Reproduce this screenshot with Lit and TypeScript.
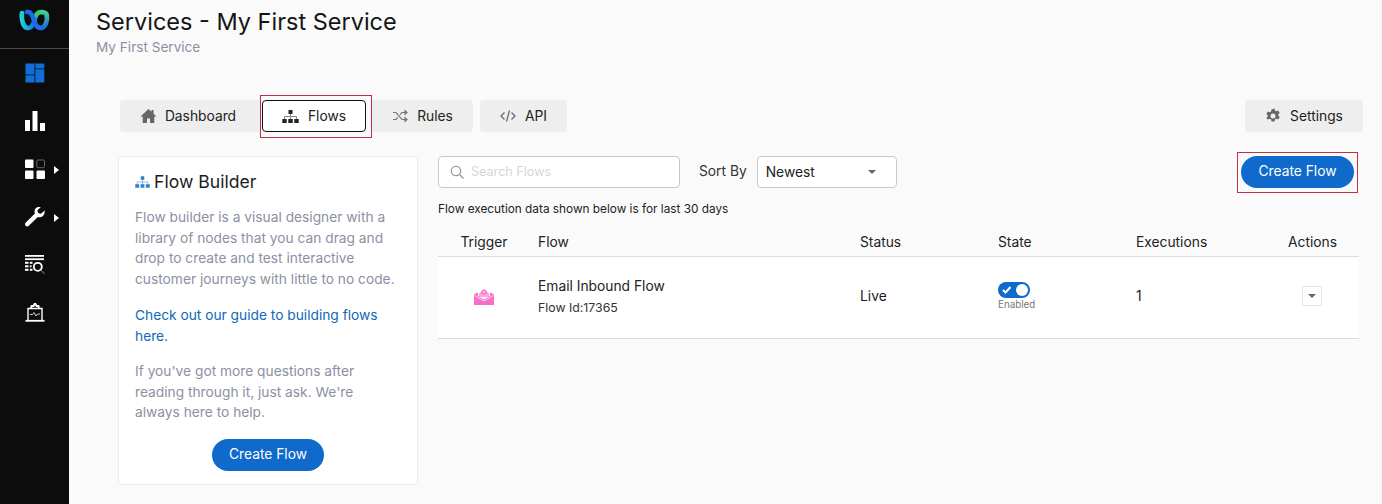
import {css, html, LitElement} from "lit"
import {customElement} from "lit/decorators.js"

const flowIcon = (color: string, line: string, w: number, h: number) => html`
  <svg width=${w} height=${h} viewBox="0 0 17 13">
    <path d="M8.500 4v5M2.500 9V6.500h12V9" fill="none" stroke=${line} stroke-width="1"/>
    <g fill=${color}>
      <rect x="6.500" y="0" width="4" height="4"/>
      <rect x="0.300" y="9" width="4.400" height="4"/>
      <rect x="6.300" y="9" width="4.400" height="4"/>
      <rect x="12.300" y="9" width="4.400" height="4"/>
    </g>
  </svg>`

@customElement("app-root")
export class AppRoot extends LitElement {
  static styles = css`
    :host {
      display: block;
      height: 504px;
      overflow: hidden;
      font-family: Inter, "Liberation Sans", sans-serif;
      font-size: 13.8px;
      color: #1c1c1c;
      background: #fafafa;
    }
    .page { display: flex; height: 504px; }

    .side { width: 69px; flex: none; background: #0c0c0c; display: flex; flex-direction: column; }
    .logo { height: 48px; border-bottom: 1px solid #4c4c4c; display: flex; align-items: flex-start; justify-content: center; box-sizing: content-box; }
    .logo svg { margin-top: 9px; }
    .nav { display: flex; flex-direction: column; }
    .nav-item { height: 48px; display: flex; align-items: center; justify-content: center; position: relative; }
    .arrow { position: absolute; left: 54px; top: 21px; width: 0; height: 0; border-left: 5px solid #fff; border-top: 4.5px solid transparent; border-bottom: 4.5px solid transparent; }

    .main { flex: 1; min-width: 0; }
    .head { padding: 7px 0 0 27px; height: 95px; box-sizing: border-box; }
    h1 { margin: 0; font-size: 23.5px; font-weight: 400; line-height: 29px; color: #151515; }
    .sub { font-size: 13.6px; line-height: 20px; margin-top: 1px; color: #8d90a3; }

    .tabs { display: flex; align-items: center; height: 42px; padding: 0 19px 0 51px; }
    .tab { height: 32px; box-sizing: border-box; background: #eeeeee; display: flex; align-items: center; justify-content: center; gap: 9px; color: #222; }
    .tab svg { flex: none; }
    .dash { width: 140px; border-radius: 4px 0 0 4px; gap: 8px; padding-right: 4px; }
    .hl { border: 1px solid #bf2f45; box-sizing: border-box; height: 43px; margin-bottom: -1px; width: 112px; padding: 4px 0 0 1px; }
    .flows { width: 104px; background: #fff; border: 1px solid #111; border-radius: 4px; }
    .rules { width: 101px; border-radius: 0 4px 4px 0; }
    .api { width: 87px; border-radius: 4px; margin-left: 7px; }
    .settings { width: 118px; border-radius: 4px; margin-left: auto; }

    .content { display: flex; align-items: flex-start; padding: 19px 23px 0 49px; gap: 20px; }

    .card { width: 300px; height: 329px; box-sizing: border-box; flex: none; background: #fff; border: 1px solid #ececec; border-radius: 4px; padding: 13px 16px 0; color: #8d90a3; font-size: 13.75px; line-height: 20.6px; }
    .card h2 { margin: 0 0 13px; font-size: 17.6px; font-weight: 400; line-height: 24px; color: #1c1c1c; display: flex; align-items: center; gap: 4px; }
    .card p { margin: 0 0 15px; }
    .card p.link { margin: 16px 0 14.5px; }
    .card a { color: #0f69b8; text-decoration: none; }
    .center { display: flex; justify-content: center; margin-top: 16.5px; }
    .btn { height: 32px; box-sizing: border-box; border: none; border-radius: 16px; background: #0f6acb; color: #fff; font: inherit; font-size: 13.8px; line-height: 30px; padding: 0 0 2px; width: 112px; }

    .right { flex: 1; min-width: 0; }
    .bar { display: flex; align-items: center; height: 32px; }
    .search { width: 242px; height: 32px; box-sizing: border-box; border: 1px solid #c9c9c9; border-radius: 4px; background: #fff; display: flex; align-items: center; gap: 6px; padding: 0 0 1px 11px; color: #d6d6d6; font-size: 12.6px; }
    .search svg { margin-top: 2px; }
    .sort { margin-left: 19px; margin-right: 10px; padding-bottom: 2px; color: #333; }
    .select { width: 140px; height: 32px; box-sizing: border-box; border: 1px solid #c9c9c9; border-radius: 4px; background: #fff; display: flex; align-items: center; justify-content: space-between; padding: 0 20px 1px 8px; color: #222; }
    .caret { width: 0; height: 0; border-top: 4.5px solid #666; border-left: 4px solid transparent; border-right: 4px solid transparent; }
    .hl2 { margin-left: auto; margin-right: 1px; margin-top: -4px; margin-bottom: -5px; border: 1px solid #bf2f45; box-sizing: border-box; width: 121px; height: 41px; padding: 3px 0 0 3px; }
    .hl2 .btn { width: 113px; display: block; }

    .note { font-size: 11.8px; line-height: 14px; margin-top: 14px; color: #222; }

    .row { display: grid; grid-template-columns: 100px 322px 138px 138px 1fr 71px; align-items: center; }
    .thead { height: 22px; margin-top: 18px; border-bottom: 1px solid #dcdcdc; align-items: start; line-height: 17px; color: #222; }
    .thead > div:first-child { text-align: center; padding-right: 8px; }
    .tbody { height: 78px; padding-bottom: 3px; background: #fff; border-bottom: 1px solid #dcdcdc; }
    .trig { display: flex; justify-content: center; padding-right: 8px; }
    .fname { line-height: 17px; color: #222; }
    .fid { font-size: 12.3px; line-height: 14px; margin-top: 6px; color: #333; }
    .state { display: flex; flex-direction: column; align-items: flex-start; }
    .toggle { width: 32px; height: 16px; border-radius: 8px; background: #0f6acb; position: relative; display: flex; align-items: center; padding-left: 4px; box-sizing: border-box; }
    .knob { position: absolute; right: 2px; top: 2px; width: 12px; height: 12px; border-radius: 50%; background: #fff; }
    .en { font-size: 9.8px; line-height: 11px; margin-top: 1px; color: #777; }
    .act { width: 20px; height: 20px; box-sizing: border-box; border: 1px solid #e2e2e2; border-radius: 2px; display: flex; align-items: center; justify-content: center; margin-left: 14px; background: #fff; }
    .act .caret { border-top-width: 4px; }
  `

  render() {
    return html`
      <div class="page">
        <aside class="side">
          <div class="logo">
            <svg width="31" height="22" viewBox="0 0 31 22" fill="none" stroke-width="4.700" stroke-linecap="round">
              <defs>
                <linearGradient id="wl" x1="0" y1="0" x2="1" y2="0"><stop offset="0" stop-color="#1fd0d8"/><stop offset="1" stop-color="#1570e8"/></linearGradient>
                <linearGradient id="wr" x1="0" y1="0" x2="0" y2="1"><stop offset="0" stop-color="#3fd08a"/><stop offset="1" stop-color="#2068e0"/></linearGradient>
              </defs>
              <path d="M15.500 11C16.500 6 19 3 22 3" stroke="#35c86a"/>
              <path d="M3 4C2 12 5 19 9 19c4 0 6-5 6.500-9" stroke="url(#wl)"/>
              <path d="M8 3c3.500-.5 6 4 7.500 10 1.500 4.500 4 6 6.500 6" stroke="#1a6af0"/>
              <path d="M23 3.200c2.500.3 4 .8 4.500 2C29 12 26 19 22 19" stroke="url(#wr)"/>
            </svg>
          </div>
          <nav class="nav">
            <div class="nav-item">
              <svg width="20" height="20" viewBox="0 0 20 20" fill="#0f6fd6">
                <rect x="0.500" y="0.500" width="9" height="11"/><rect x="10.300" y="0.500" width="9" height="5"/>
                <rect x="10.300" y="6.300" width="9" height="13.200"/><rect x="0.500" y="12.300" width="9" height="7.200"/>
              </svg>
            </div>
            <div class="nav-item">
              <svg width="20" height="20" viewBox="0 0 20 20" fill="#fff">
                <rect x="0" y="9" width="5" height="11"/><rect x="7.500" y="0" width="5" height="20"/><rect x="15" y="12" width="5" height="8"/>
              </svg>
            </div>
            <div class="nav-item">
              <svg width="20" height="20" viewBox="0 0 20 20" fill="#fff">
                <rect x="0" y="0.500" width="8.500" height="8.500" rx="1"/>
                <rect x="11.800" y="1" width="7.700" height="7.700" rx="1" fill="none" stroke="#666"/>
                <rect x="0" y="11.500" width="8.500" height="8.500" rx="1"/><rect x="11.500" y="11.500" width="8.500" height="8.500" rx="1"/>
              </svg>
              <span class="arrow"></span>
            </div>
            <div class="nav-item">
              <svg width="20" height="20" viewBox="0 0 20 20" fill="#fff">
                <path d="M19.500 3.500l-3.600 3.300-2.800-.8-.7-2.700L15.700.2c-2.600-.8-5.400.4-6 3-.3 1.100-.2 2.200.2 3.200L.8 15.600c-1 1-1 2.300-.2 3.200.9.900 2.300.9 3.200 0l9.100-8.900c1.100.4 2.300.5 3.400.1 2.500-.8 3.800-3.900 3.200-6.500z"/>
              </svg>
              <span class="arrow"></span>
            </div>
            <div class="nav-item">
              <svg width="20" height="20" viewBox="0 0 20 20" fill="#fff">
                <rect x="0" y="0" width="19" height="1.800"/><rect x="0" y="3.300" width="19" height="1.800"/>
                <rect x="0" y="6.800" width="3.500" height="2"/><rect x="4.800" y="6.800" width="2.700" height="2"/>
                <rect x="0" y="10.300" width="3.500" height="2"/><rect x="4.800" y="10.300" width="1.700" height="2"/>
                <rect x="0" y="13.800" width="3.500" height="2"/><rect x="4.800" y="13.800" width="2.700" height="2"/>
                <circle cx="12.800" cy="11.800" r="4" fill="none" stroke="#fff" stroke-width="1.800"/>
                <path d="M15.800 15l3.500 3.800" stroke="#999" stroke-width="1"/>
              </svg>
            </div>
            <div class="nav-item">
              <svg width="20" height="20" viewBox="0 0 20 20" fill="none" stroke="#fff" stroke-width="1.400">
                <path d="M3 17V5.500h14V17"/>
                <path d="M6 5.500L6.500 3h2L9.500 1h1l1 2h2l.5 2.500" stroke-width="1.800"/>
                <path d="M5 11.500h2.500l1.500-2 2 3.500 1.500-2H15" stroke-width="0.800"/>
                <path d="M.5 17.800h19" stroke-width="1.800"/>
              </svg>
            </div>
          </nav>
        </aside>

        <main class="main">
          <header class="head">
            <h1>Services - My First Service</h1>
            <div class="sub">My First Service</div>
          </header>

          <div class="tabs">
            <div class="tab dash">
              <svg width="17" height="16" viewBox="0 0 16 16" fill="#666"><path d="M8 1L0 8.500h2.200V15H6.500v-4.500h3V15h4.300V8.500H16L13 5.700V2h-2v1.800z"/></svg>
              Dashboard
            </div>
            <div class="hl"><div class="tab flows">${flowIcon("#222", "#888", 17, 13)} Flows</div></div>
            <div class="tab rules">
              <svg width="16" height="16" viewBox="0 0 16 16" fill="none" stroke="#777" stroke-width="1.200">
                <path d="M1 4.500h3l6 7h3.500M1 11.500h3l1.800-2.200M8 6.700l2-2.200h3.500"/>
                <path d="M13 2.800l2 1.700-2 1.700zM13 9.800l2 1.700-2 1.700z" fill="#777"/>
              </svg>
              Rules
            </div>
            <div class="tab api">
              <svg width="16" height="16" viewBox="0 0 16 16" fill="none" stroke="#666" stroke-width="1.200">
                <path d="M4.500 4.500L1 8l3.500 3.500M11.500 4.500L15 8l-3.500 3.500M9.500 2.500l-3 11"/>
              </svg>
              API
            </div>
            <div class="tab settings">
              <svg width="16" height="16" viewBox="0 0 16 16"><path fill="#666" fill-rule="evenodd" d="M9.500.500l.4 2 1.300.7 2-.7 1.500 2.600-1.500 1.300v1.200l1.500 1.300-1.500 2.600-2-.7-1.300.7-.4 2h-3l-.4-2-1.300-.7-2 .7L1.300 9.900l1.500-1.300V7.400L1.300 6.100l1.500-2.600 2 .7 1.300-.7.400-2zM8 5.500a2.500 2.500 0 1 0 0 5 2.500 2.500 0 0 0 0-5z"/></svg>
              Settings
            </div>
          </div>

          <div class="content">
            <section class="card">
              <h2>${flowIcon("#2f7fd0", "#7fb0e0", 15, 12)} Flow Builder</h2>
              <p>Flow builder is a visual designer with a library of nodes that you can drag and drop to create and test interactive customer journeys with little to no code.</p>
              <p class="link"><a href="#">Check out our guide to building flows here.</a></p>
              <p>If you've got more questions after reading through it, just ask. We're always here to help.</p>
              <div class="center"><button class="btn">Create Flow</button></div>
            </section>

            <section class="right">
              <div class="bar">
                <div class="search">
                  <svg width="15" height="15" viewBox="0 0 15 15" fill="none" stroke="#999" stroke-width="1.300"><circle cx="6" cy="6" r="4.700"/><path d="M9.500 9.500l4 4"/></svg>
                  Search Flows
                </div>
                <div class="sort">Sort By</div>
                <div class="select">Newest <span class="caret"></span></div>
                <div class="hl2"><button class="btn">Create Flow</button></div>
              </div>
              <div class="note">Flow execution data shown below is for last 30 days</div>
              <div class="row thead">
                <div>Trigger</div><div>Flow</div><div>Status</div><div>State</div><div>Executions</div><div>Actions</div>
              </div>
              <div class="row tbody">
                <div class="trig">
                  <svg width="20" height="17" viewBox="0 0 20 17">
                    <path fill="#fba6dc" d="M5 5L10 1.500 15 5v4H5z"/>
                    <circle cx="10" cy="4" r="2.600" fill="#f86dc5"/>
                    <circle cx="10" cy="4" r="1.300" fill="#fccbea"/>
                    <path fill="#f86dc5" d="M0 6.500L4 4.500V8l6 3.500L16 8V4.500l4 2V17H0z"/>
                    <path fill="none" stroke="#ffe0f3" stroke-width="0.900" d="M0.500 7.500l9.500 5.500 9.500-5.500"/>
                  </svg>
                </div>
                <div>
                  <div class="fname">Email Inbound Flow</div>
                  <div class="fid">Flow Id:17365</div>
                </div>
                <div>Live</div>
                <div class="state">
                  <div class="toggle">
                    <svg width="10" height="8" viewBox="0 0 10 8" fill="none" stroke="#fff" stroke-width="2"><path d="M1 4l2.500 2.500L8.500 1"/></svg>
                    <span class="knob"></span>
                  </div>
                  <div class="en">Enabled</div>
                </div>
                <div>1</div>
                <div><div class="act"><span class="caret"></span></div></div>
              </div>
            </section>
          </div>
        </main>
      </div>
    `
  }
}
